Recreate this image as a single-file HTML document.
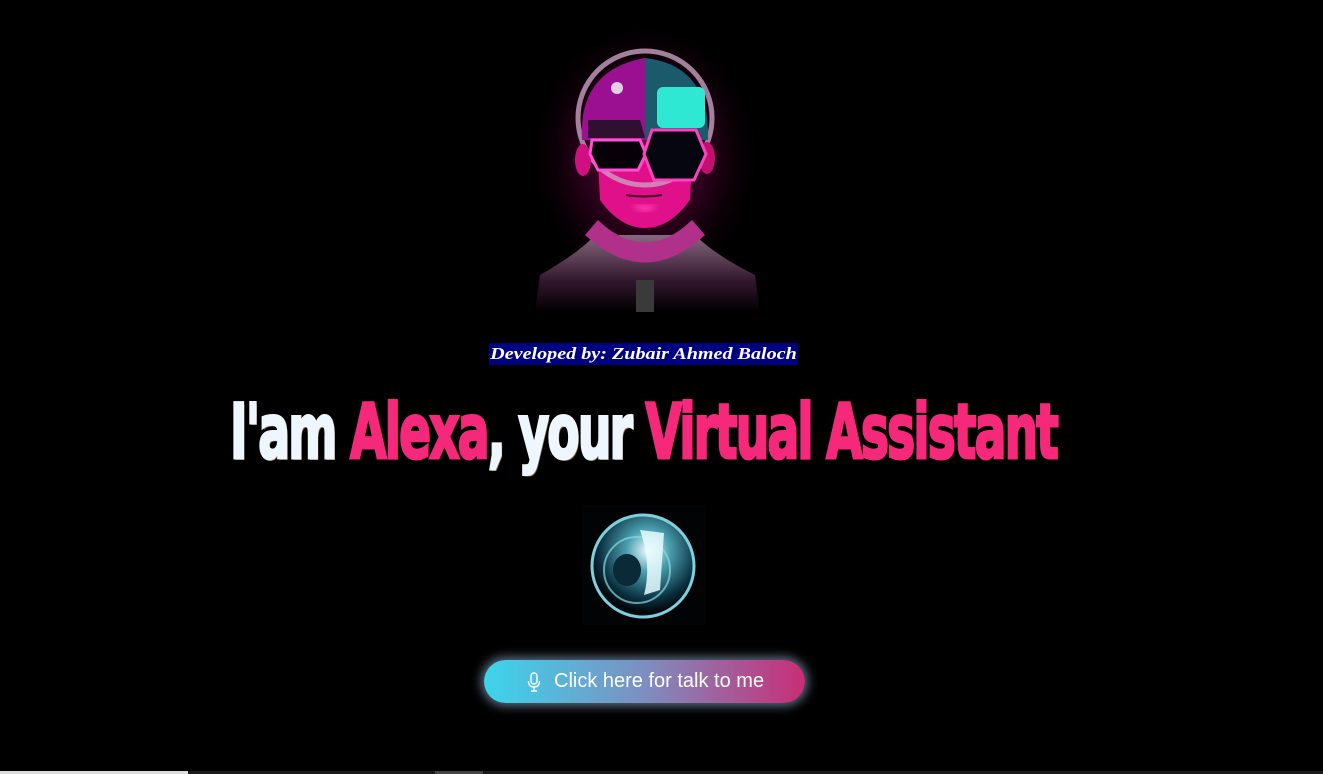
<!DOCTYPE html>
<html><head><meta charset="utf-8"><style>
html,body{margin:0;padding:0;background:#000;width:1323px;height:774px;overflow:hidden;position:relative}
.dev{position:absolute;left:489px;top:343px;height:22px;padding:0 1px;background:#000080;color:#fff;font:italic bold 17px/22px "Liberation Serif",serif;white-space:nowrap;transform-origin:0 0}
.h{position:absolute;left:230px;top:392px;white-space:nowrap;font:bold 76px/80px "DejaVu Sans","Liberation Sans",sans-serif;transform-origin:0 0;letter-spacing:-3px;-webkit-text-stroke:3px currentColor}
.w{color:#eef6ff;text-shadow:2px 2px 0 #8a6a3a}
.p{color:#f5287a}
.btn{position:absolute;left:484px;top:660px;width:321px;height:43px;border-radius:22px;background:linear-gradient(90deg,#3bd6ec,#7d8ec0 50%,#c92d76);box-shadow:0 0 10px 3px rgba(170,200,240,.55);color:#fff;font:20px/43px "Liberation Sans",sans-serif}
.btn span{position:absolute;left:70px;top:0}
.mic{position:absolute;left:43px;top:12px}
.bar1{position:absolute;left:0;top:771px;width:188px;height:3px;background:#ddd}
.bar2{position:absolute;left:188px;top:771px;width:1135px;height:3px;background:#1a1a1a}
.bar3{position:absolute;left:435px;top:771px;width:48px;height:3px;background:#444}
</style></head><body>
<svg style="position:absolute;left:520px;top:30px" width="260" height="300" viewBox="0 0 260 300">
<defs>
<radialGradient id="gl" cx="50%" cy="45%" r="50%"><stop offset="0" stop-color="#ff1aa0" stop-opacity=".55"/><stop offset=".6" stop-color="#6a0040" stop-opacity=".3"/><stop offset="1" stop-color="#000" stop-opacity="0"/></radialGradient>
<linearGradient id="bd" x1="0" y1="0" x2="0" y2="1"><stop offset="0" stop-color="#9a7a94"/><stop offset=".6" stop-color="#3a1a34"/><stop offset="1" stop-color="#000"/></linearGradient>
<filter id="b"><feGaussianBlur stdDeviation="3"/></filter>
</defs>
<ellipse cx="125" cy="140" rx="120" ry="140" fill="url(#gl)"/>
<path d="M15 282 L20 245 Q60 222 75 205 L175 205 Q195 225 235 245 L240 282Z" fill="url(#bd)" opacity=".85"/>
<path d="M65 205 Q125 260 185 205 L172 190 Q125 235 78 190Z" fill="#b0308a"/>
<rect x="116" y="250" width="18" height="32" fill="#3a3a3a"/>
<path d="M78 130 L80 170 Q100 198 125 198 Q150 198 170 170 L172 130Z" fill="#e0108a"/>
<circle cx="125" cy="88" r="67" fill="none" stroke="#c8a0c0" stroke-width="5" opacity=".8"/>
<path d="M62 110 Q58 40 125 28 L125 110Z" fill="#9a1090"/>
<path d="M125 28 Q190 35 188 110 L125 110Z" fill="#1a5a6a"/>
<rect x="137" y="57" width="48" height="41" rx="6" fill="#2ee8d4"/>
<circle cx="97" cy="58" r="6" fill="#e0d0e0"/>
<path d="M68 90 L120 90 L125 108 L68 108Z" fill="#301030"/>
<ellipse cx="63" cy="130" rx="8" ry="16" fill="#d01080"/>
<ellipse cx="187" cy="128" rx="8" ry="16" fill="#c01070"/>
<polygon points="72,110 120,110 126,124 118,140 78,140 70,124" fill="#080008" stroke="#ff50d0" stroke-width="3"/>
<polygon points="132,100 176,100 186,124 174,150 134,150 124,124" fill="#060610" stroke="#ff40c0" stroke-width="3"/>
<path d="M106 165 Q125 168 142 165" stroke="#400020" stroke-width="2" fill="none"/>
<path d="M112 175 Q125 188 138 175" fill="#ff3ab0" filter="url(#b)"/>
</svg>
<div class="dev" id="d">Developed by: Zubair Ahmed Baloch</div>
<div class="h" id="h"><span class="w">I'am </span><span class="p">Alexa</span><span class="w">, your </span><span class="p">Virtual Assistant</span></div>
<svg style="position:absolute;left:582px;top:505px" width="124" height="120" viewBox="0 0 124 120">
<defs><radialGradient id="o" cx="55%" cy="35%" r="60%"><stop offset="0" stop-color="#f4ffff"/><stop offset=".35" stop-color="#4aa0b0"/><stop offset=".8" stop-color="#0a3040"/><stop offset="1" stop-color="#02080c"/></radialGradient></defs>
<rect width="124" height="120" fill="#010304"/>
<circle cx="61" cy="61" r="51" fill="url(#o)"/>
<circle cx="61" cy="61" r="51" fill="none" stroke="#7fd0dc" stroke-width="3"/>
<circle cx="55" cy="65" r="33" fill="none" stroke="#8ad8e0" stroke-width="2" opacity=".7"/>
<path d="M58 25 L82 28 L78 85 L62 90 Q70 60 58 25Z" fill="#e8fbff" opacity=".85"/>
<ellipse cx="45" cy="65" rx="14" ry="16" fill="#0a2a38"/>
</svg>
<div class="btn"><svg class="mic" width="14" height="20" viewBox="0 0 14 20" fill="none" stroke="#fff" stroke-width="1.4"><rect x="4" y="1" width="6" height="11" rx="3"/><path d="M1.5 9 Q1.5 15 7 15 Q12.5 15 12.5 9M7 15V19M4 19H10"/></svg><span>Click here for talk to me</span></div>
<div class="bar2"></div><div class="bar1"></div><div class="bar3"></div>
<script>
var h=document.getElementById('h');var w=h.getBoundingClientRect().width;h.style.transform='scaleX('+(827/w)+')';
var d=document.getElementById('d');var dw=d.getBoundingClientRect().width;d.style.transform='scaleX('+(309/dw)+')';
</script>
</body></html>
